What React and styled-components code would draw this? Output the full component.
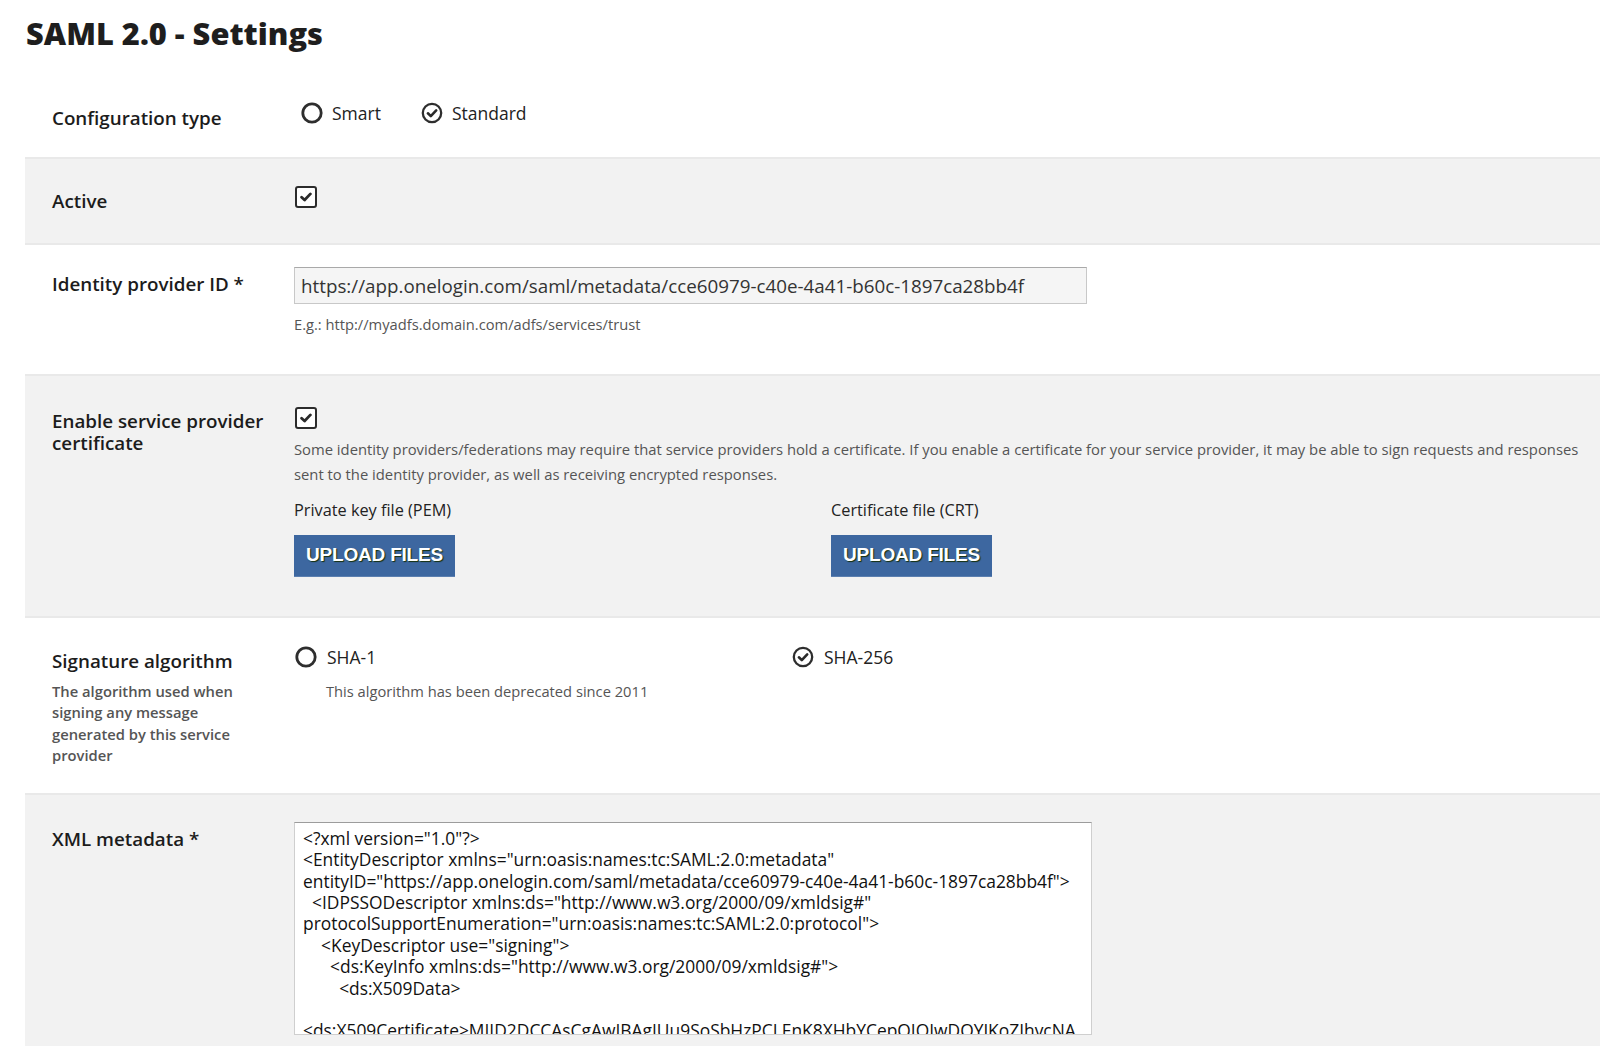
import React from "react";
import styled, { createGlobalStyle } from "styled-components";

const Global = createGlobalStyle`
  html, body { margin: 0; padding: 0; background: #ffffff; }
  body { font-family: "Open Sans", "Noto Sans", sans-serif; color: #1c1c1c; }
  * { box-sizing: border-box; }
`;

const Page = styled.div`
  padding: 0 0 0 25px;
`;

const Title = styled.h1`
  margin: 0;
  padding: 12px 0 0 1px;
  height: 74px;
  font-size: 30.8px;
  line-height: 42px;
  font-weight: 800;
  color: #1e1e1e;
`;

const Row = styled.section`
  display: grid;
  grid-template-columns: 269px 1fr;
  padding: ${(p) => p.$pt ?? 28}px 6px ${(p) => p.$pb ?? 28}px 0;
  background: ${(p) => (p.$shade ? "#f2f2f2" : "#ffffff")};
  border-top: 2px solid ${(p) => (p.$shade ? "#e9e9e9" : "transparent")};
  border-bottom: 2px solid ${(p) => (p.$shade ? "#e9e9e9" : "transparent")};
`;

const LabelCol = styled.div`
  padding: ${(p) => p.$top ?? 4.5}px 27px 0 27px;
`;

const Label = styled.div`
  font-size: 18.8px;
  font-weight: 600;
  line-height: ${(p) => p.$lh ?? 22}px;
  color: #1c1c1c;
`;

const LabelNote = styled.div`
  margin-top: 8.5px;
  font-size: 14.75px;
  font-weight: 600;
  line-height: 21.4px;
  color: #555555;
`;

const Controls = styled.div`
  display: flex;
  flex-direction: column;
  align-items: flex-start;
  padding-bottom: ${(p) => p.$pb ?? 0}px;
`;

const RadioGroup = styled.div`
  display: flex;
  align-items: flex-start;
  margin-left: ${(p) => p.$ml ?? 0}px;
`;

const RadioItem = styled.div`
  width: ${(p) => (p.$w ? `${p.$w}px` : "auto")};
  margin-right: ${(p) => p.$mr ?? 0}px;
  display: flex;
  flex-direction: column;
`;

const RadioLine = styled.label`
  display: flex;
  align-items: center;
  gap: ${(p) => p.$gap ?? 10}px;
  height: 22px;
  font-size: 17.5px;
  line-height: 22px;
  color: #222222;
`;

const RadioNote = styled.div`
  margin: 12.5px 0 0 31px;
  font-size: 14.7px;
  line-height: 20px;
  color: #555555;
`;

const Box = styled.span`
  display: inline-flex;
  width: 22px;
  height: 22px;
  margin-left: 1px;
  border: 2px solid #2c2c2c;
  border-radius: 3px;
  align-items: center;
  justify-content: center;
  background: #ffffff;
`;

const TextInput = styled.input`
  width: 793px;
  height: 37px;
  padding: 0 6px;
  border: 1px solid #c8c8c8;
  border-top-color: #a9a9a9;
  background: #f5f5f5;
  font-family: "Open Sans", sans-serif;
  font-size: 18.8px;
  color: #333333;
  outline: none;
`;

const Hint = styled.div`
  margin-top: 9.5px;
  font-size: 14.7px;
  line-height: 20px;
  color: #555555;
`;

const Description = styled.p`
  margin: 8.5px 0 0 0;
  font-size: 14.8px;
  line-height: 24.5px;
  color: #555555;
`;

const UploadRow = styled.div`
  display: flex;
  margin-top: 12px;
`;

const UploadCol = styled.div`
  width: ${(p) => p.$w ?? 537}px;
  display: flex;
  flex-direction: column;
  align-items: flex-start;
`;

const FileLabel = styled.div`
  font-size: 16.3px;
  line-height: 24px;
  color: #222222;
`;

const UploadButton = styled.button`
  margin-top: 12.5px;
  width: 161px;
  height: 42px;
  padding: 0;
  border: none;
  border-bottom: 1px solid #5b7fb0;
  background: #3d67a0;
  color: #ffffff;
  font-family: "Liberation Sans", Arial, sans-serif;
  font-weight: 700;
  font-size: 19px;
  letter-spacing: -0.2px;
  text-shadow: 1px 1px 1px #14300e;
  cursor: pointer;
`;

const XmlArea = styled.textarea`
  width: 798px;
  height: 213px;
  padding: 5px 8px;
  border: 1px solid #cfcfcf;
  border-top-color: #9c9c9c;
  background: #ffffff;
  font-family: "Open Sans", sans-serif;
  font-size: 17.4px;
  line-height: 21.4px;
  color: #111111;
  resize: none;
  outline: none;
  overflow: hidden;
`;

const RadioIcon = ({ checked }) => (
  <svg width="22" height="22" viewBox="0 0 22 22" aria-hidden="true">
    <circle cx="11" cy="11" r="9.2" fill="none" stroke="#2e2e2e" strokeWidth={checked ? 2.3 : 2.8} />
    {checked && (
      <path d="M6.9 11.3 L9.8 14.1 L15.2 8.4" fill="none" stroke="#2a2a2a" strokeWidth="2.6" strokeLinecap="round" strokeLinejoin="round" />
    )}
  </svg>
);

const Checkbox = () => (
  <Box>
    <svg width="12" height="10" viewBox="0 0 12 10" aria-hidden="true">
      <path d="M1.6 5.2 L4.6 8 L10.4 1.9" fill="none" stroke="#2a2a2a" strokeWidth="2.8" strokeLinecap="round" strokeLinejoin="round" />
    </svg>
  </Box>
);

const xml = `<?xml version="1.0"?>
<EntityDescriptor xmlns="urn:oasis:names:tc:SAML:2.0:metadata" entityID="https://app.onelogin.com/saml/metadata/cce60979-c40e-4a41-b60c-1897ca28bb4f">
  <IDPSSODescriptor xmlns:ds="http://www.w3.org/2000/09/xmldsig#" protocolSupportEnumeration="urn:oasis:names:tc:SAML:2.0:protocol">
    <KeyDescriptor use="signing">
      <ds:KeyInfo xmlns:ds="http://www.w3.org/2000/09/xmldsig#">
        <ds:X509Data>
          <ds:X509Certificate>MIID2DCCAsCgAwIBAgIUu9SoSbHzPCLEnK8XHbYCepQIQIwDQYJKoZIhvcNAQEFBQAwRTEQMA4GA1UECgwHQWNtZSBDbzEVMBMGA1UECwwMT25lTG9naW4gSWRQMRowGAYDVQQDDBFPbmVMb2dpbiBBY2NvdW50IDAeFw0yMDA</ds:X509Certificate>
        </ds:X509Data>
      </ds:KeyInfo>
    </KeyDescriptor>
  </IDPSSODescriptor>
</EntityDescriptor>`;

export default function App() {
  return (
    <Page>
      <Global />
      <Title>SAML 2.0 - Settings</Title>

      <Row $pt={26} $pb={26.5}>
        <LabelCol $top={4.5}>
          <Label>Configuration type</Label>
        </LabelCol>
        <Controls>
          <RadioGroup $ml={7}>
            <RadioItem $mr={40}>
              <RadioLine $gap={9}>
                <RadioIcon checked={false} />
                Smart
              </RadioLine>
            </RadioItem>
            <RadioItem>
              <RadioLine $gap={9}>
                <RadioIcon checked />
                Standard
              </RadioLine>
            </RadioItem>
          </RadioGroup>
        </Controls>
      </Row>

      <Row $shade $pt={27} $pb={31}>
        <LabelCol $top={4}>
          <Label>Active</Label>
        </LabelCol>
        <Controls>
          <Checkbox />
        </Controls>
      </Row>

      <Row $pt={20} $pb={24.5}>
        <LabelCol $top={6}>
          <Label>Identity provider ID *</Label>
        </LabelCol>
        <Controls $pb={14}>
          <TextInput readOnly value="https://app.onelogin.com/saml/metadata/cce60979-c40e-4a41-b60c-1897ca28bb4f" />
          <Hint>E.g.: http://myadfs.domain.com/adfs/services/trust</Hint>
        </Controls>
      </Row>

      <Row $shade $pt={30.5} $pb={27}>
        <LabelCol $top={4.5}>
          <Label $lh={21.5}>Enable service provider certificate</Label>
        </LabelCol>
        <Controls $pb={12}>
          <Checkbox />
          <Description>
            Some identity providers/federations may require that service providers hold a certificate. If you enable a certificate for your service provider, it may be able to sign requests and responses sent to the identity provider, as well as receiving encrypted responses.
          </Description>
          <UploadRow>
            <UploadCol $w={537}>
              <FileLabel>Private key file (PEM)</FileLabel>
              <UploadButton>UPLOAD FILES</UploadButton>
            </UploadCol>
            <UploadCol $w={200}>
              <FileLabel>Certificate file (CRT)</FileLabel>
              <UploadButton>UPLOAD FILES</UploadButton>
            </UploadCol>
          </UploadRow>
        </Controls>
      </Row>

      <Row $pt={26.5} $pb={24.5}>
        <LabelCol $top={4.2}>
          <Label>Signature algorithm</Label>
          <LabelNote>The algorithm used when signing any message generated by this service provider</LabelNote>
        </LabelCol>
        <Controls>
          <RadioGroup $ml={1}>
            <RadioItem $w={497}>
              <RadioLine $gap={10}>
                <RadioIcon checked={false} />
                SHA-1
              </RadioLine>
              <RadioNote>This algorithm has been deprecated since 2011</RadioNote>
            </RadioItem>
            <RadioItem>
              <RadioLine $gap={10}>
                <RadioIcon checked />
                SHA-256
              </RadioLine>
            </RadioItem>
          </RadioGroup>
        </Controls>
      </Row>

      <Row $shade $pt={27} $pb={28}>
        <LabelCol $top={6.4}>
          <Label>XML metadata *</Label>
        </LabelCol>
        <Controls>
          <XmlArea readOnly value={xml} />
        </Controls>
      </Row>
    </Page>
  );
}
